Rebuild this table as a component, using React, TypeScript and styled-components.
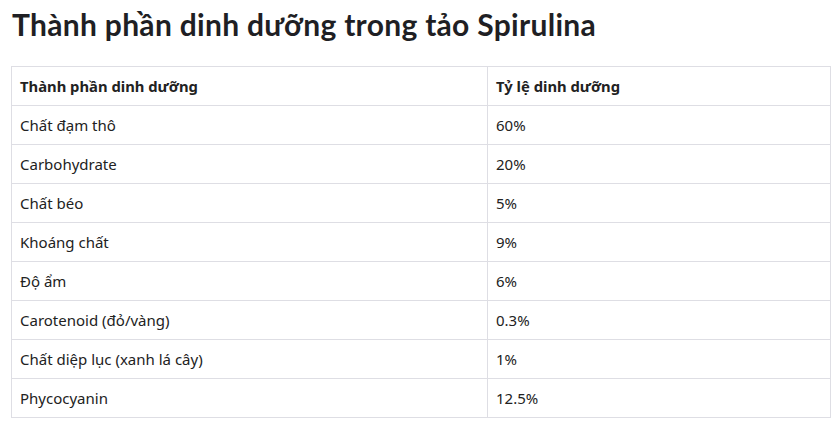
import React from "react";
import styled, { createGlobalStyle } from "styled-components";

const Global = createGlobalStyle`
  html, body { margin: 0; padding: 0; background: #ffffff; }
  body { font-family: "Noto Sans", "Open Sans", sans-serif; color: #222; }
`;

const Page = styled.div`
  padding: 4px 9px 0 11px;
  width: 820px;
`;

const Title = styled.h2`
  margin: 0 0 0 1px;
  font-family: Lato, "Noto Sans", sans-serif;
  font-weight: 700;
  font-size: 30px;
  letter-spacing: 0.3px;
  line-height: 40px;
  color: #1f1f24;
`;

const Table = styled.table`
  margin-top: 22px;
  width: 820px;
  border-collapse: collapse;
  color: #222;
`;

const Cell = styled.td<{ $head?: boolean; $w?: string }>`
  border: 1px solid #dedee4;
  height: 39px;
  padding: 0 8px;
  box-sizing: border-box;
  font-size: ${(p) => (p.$head ? "14.8px" : "15px")};
  font-weight: ${(p) => (p.$head ? 700 : 400)};
  width: ${(p) => p.$w ?? "auto"};
  vertical-align: middle;
`;

const rows: [string, string][] = [
  ["Chất đạm thô", "60%"],
  ["Carbohydrate", "20%"],
  ["Chất béo", "5%"],
  ["Khoáng chất", "9%"],
  ["Độ ẩm", "6%"],
  ["Carotenoid (đỏ/vàng)", "0.3%"],
  ["Chất diệp lục (xanh lá cây)", "1%"],
  ["Phycocyanin", "12.5%"],
];

export default function App() {
  return (
    <Page>
      <Global />
      <Title>Thành phần dinh dưỡng trong tảo Spirulina</Title>
      <Table>
        <tbody>
          <tr>
            <Cell $head $w="476px">Thành phần dinh dưỡng</Cell>
            <Cell $head>Tỷ lệ dinh dưỡng</Cell>
          </tr>
          {rows.map(([a, b]) => (
            <tr key={a}>
              <Cell>{a}</Cell>
              <Cell>{b}</Cell>
            </tr>
          ))}
        </tbody>
      </Table>
    </Page>
  );
}
